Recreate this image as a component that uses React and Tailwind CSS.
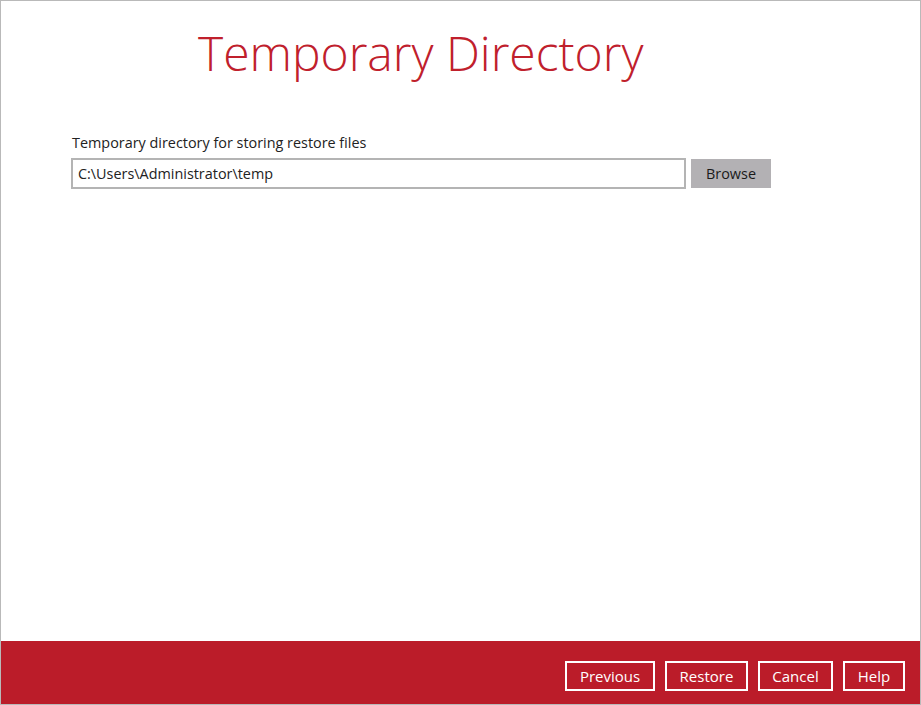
import React from 'react';

const FooterButton = ({ label, width }) => (
  <button className={`h-[30px] border-2 border-white text-white text-[15px] ${width}`}>{label}</button>
);

const App = () => {
  return (
    <div
      className="w-[921px] h-[705px] bg-white border border-[#b9b9b9] flex flex-col"
      style={{ fontFamily: '"Open Sans", "Liberation Sans", sans-serif' }}
    >
      <div className="flex-1 flex flex-col">
        <h1 className="mt-[17px] ml-[197px] text-[48px] leading-[70px] font-light text-[#c0202c]">
          Temporary Directory
        </h1>
        <div className="mt-[45px] ml-[70px]">
          <p className="text-[14.4px] leading-[20px] text-[#222] ml-[1px]">Temporary directory for storing restore files</p>
          <div className="mt-[5px] flex items-center gap-[5px]">
            <div className="w-[615px] h-[31px] border-2 border-[#b4b4b4] flex items-center px-[5px] text-[14.4px] text-[#222]">
              C:\Users\Administrator\temp
            </div>
            <button className="w-[80px] h-[29px] bg-[#b3b1b4] text-[14.4px] text-[#1a1a1a]">Browse</button>
          </div>
        </div>
      </div>
      <div className="h-[63px] bg-[#bb1c29] flex items-center justify-end gap-[10px] pr-[15px] pt-[7px]">
        <FooterButton label="Previous" width="w-[90px]" />
        <FooterButton label="Restore" width="w-[83px]" />
        <FooterButton label="Cancel" width="w-[75px]" />
        <FooterButton label="Help" width="w-[62px]" />
      </div>
    </div>
  );
};

export default App;
